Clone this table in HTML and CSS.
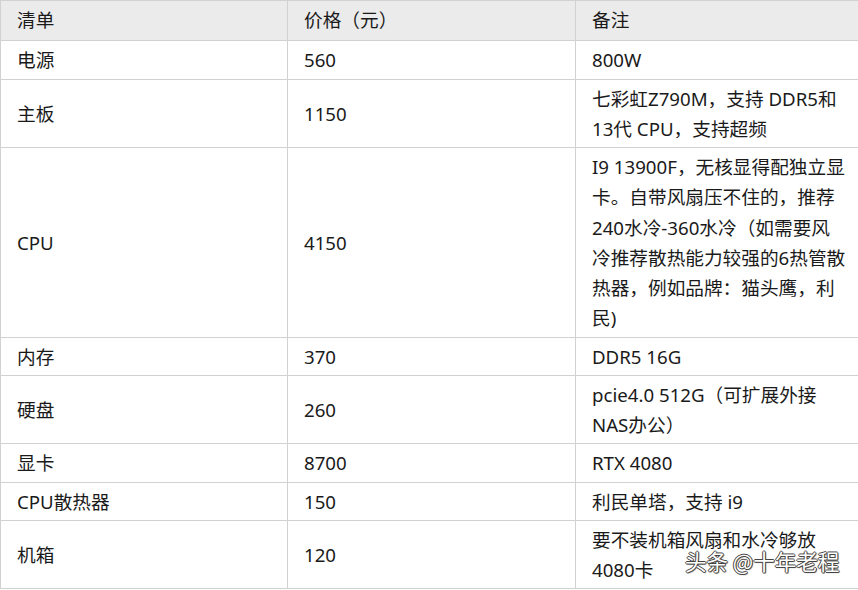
FILE: index.html
```html
<!DOCTYPE html>
<html lang="zh-CN">
<head>
<meta charset="utf-8">
<title>配置清单</title>
<link rel="stylesheet" href="styles.css">
</head>
<body>
<div class="frame">
<table class="spec">
  <colgroup><col class="c1"><col class="c2"><col class="c3"></colgroup>
  <thead>
    <tr><th>清单</th><th>价格（元）</th><th>备注</th></tr>
  </thead>
  <tbody>
    <tr><td>电源</td><td>560</td><td>800W</td></tr>
    <tr><td>主板</td><td>1150</td><td>七彩虹Z790M，支持 DDR5和13代 CPU，支持超频</td></tr>
    <tr><td>CPU</td><td>4150</td><td>I9 13900F，无核显得配独立显卡。自带风扇压不住的，推荐240水冷-360水冷（如需要风冷推荐散热能力较强的6热管散热器，例如品牌：猫头鹰，利民)</td></tr>
    <tr><td>内存</td><td>370</td><td>DDR5 16G</td></tr>
    <tr><td>硬盘</td><td>260</td><td>pcie4.0 512G（可扩展外接NAS办公）</td></tr>
    <tr><td>显卡</td><td>8700</td><td>RTX 4080</td></tr>
    <tr><td>CPU散热器</td><td>150</td><td>利民单塔，支持 i9</td></tr>
    <tr><td>机箱</td><td>120</td><td>要不装机箱风扇和水冷够放4080卡</td></tr>
  </tbody>
</table>
<div class="watermark">头条 @十年老程</div>
</div>
</body>
</html>
```
FILE: styles.css
```css
html, body {
  margin: 0;
  padding: 0;
  background: #fff;
  overflow: hidden;
}
.frame {
  position: relative;
  width: 858px;
  height: 590px;
  overflow: hidden;
}
.spec {
  border-collapse: collapse;
  table-layout: fixed;
  width: 863px;
  font-family: "Noto Sans", "Noto Sans CJK SC", sans-serif;
  font-size: 18.67px;
  line-height: 30.25px;
  color: #1a1a1a;
}
.c1 { width: 287px; }
.c2 { width: 288px; }
.c3 { width: 288px; }
.spec th, .spec td {
  border: 1px solid #d2d2d2;
  padding: 4px 16px 3px 16px;
  text-align: left;
  vertical-align: middle;
  font-weight: normal;
}
.spec thead th {
  background: #ebebeb;
  padding-top: 4px;
  padding-bottom: 5px;
}
.watermark {
  position: absolute;
  left: 685px;
  top: 546px;
  font-family: "Noto Sans CJK SC", sans-serif;
  font-size: 21.5px;
  line-height: 30px;
  color: #fff;
  text-shadow: 1px 0 0 #444, -1px 0 0 #444, 0 1px 0 #444, 0 -1px 0 #444, 1px 1px 1px #666;
}
```
